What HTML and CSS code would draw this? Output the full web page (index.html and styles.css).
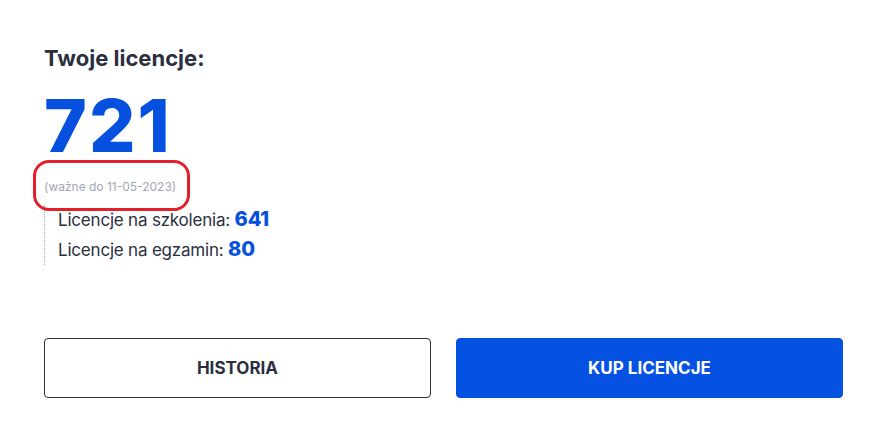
FILE: index.html
```html
<!DOCTYPE html>
<html lang="pl">
<head>
<meta charset="utf-8">
<title>Twoje licencje</title>
<link rel="stylesheet" href="styles.css">
</head>
<body>
<main class="card">
  <h1 class="title">Twoje licencje:</h1>
  <div class="count">721</div>
  <div class="valid">(ważne do 11-05-2023)</div>
  <ul class="breakdown">
    <li>Licencje na szkolenia: <strong>641</strong></li>
    <li>Licencje na egzamin: <strong>80</strong></li>
  </ul>
  <div class="actions">
    <button class="btn btn-outline">HISTORIA</button>
    <button class="btn btn-primary">KUP LICENCJE</button>
  </div>
  <div class="highlight"></div>
</main>
</body>
</html>
```
FILE: styles.css
```css
html, body {
  margin: 0;
  padding: 0;
  background: #ffffff;
}
body {
  font-family: Inter, "Liberation Sans", sans-serif;
  color: #2b2f40;
}
.card {
  position: relative;
  padding: 44px 44px 0 44px;
}
.title {
  margin: 0;
  font-size: 22px;
  line-height: 29px;
  font-weight: 700;
  color: #2b2f40;
  letter-spacing: 0;
}
.count {
  margin-top: 21px;
  font-size: 73px;
  line-height: 64px;
  font-weight: 800;
  color: #0650e0;
  letter-spacing: 2px;
}
.valid {
  margin-top: 21px;
  font-size: 12px;
  line-height: 16px;
  color: #a3a6b4;
  letter-spacing: 0;
}
.breakdown {
  list-style: none;
  margin: 10px 0 0 0;
  padding: 0 0 0 13px;
  border-left: 1px dotted #a3a6b4;
}
.breakdown li {
  font-size: 17px;
  line-height: 29px;
  color: #2b2f40;
  letter-spacing: -0.2px;
}
.breakdown strong {
  font-size: 20px;
  font-weight: 800;
  color: #0650e0;
}
.actions {
  display: grid;
  grid-template-columns: 1fr 1fr;
  gap: 25px;
  margin-top: 73px;
}
.btn {
  height: 60px;
  border-radius: 4px;
  font-family: inherit;
  font-size: 17px;
  font-weight: 700;
  letter-spacing: 0;
  cursor: pointer;
}
.btn-outline {
  background: #ffffff;
  border: 1px solid #2b2f40;
  color: #2b2f40;
}
.btn-primary {
  background: #0551e2;
  border: 1px solid #0551e2;
  color: #ffffff;
}
.highlight {
  position: absolute;
  left: 33px;
  top: 160px;
  width: 151px;
  height: 45px;
  border: 3px solid #e3202a;
  border-radius: 16px;
  pointer-events: none;
}
```
